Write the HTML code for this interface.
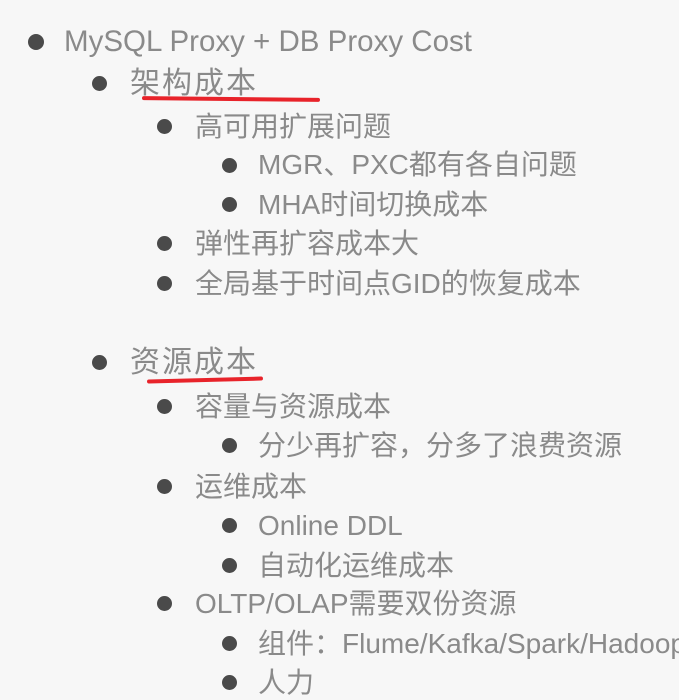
<!DOCTYPE html>
<html><head><meta charset="utf-8"><style>
html,body{margin:0;padding:0}
body{width:679px;height:697px;background:#f7f7f7;position:relative;overflow:hidden;font-family:"Liberation Sans","Noto Sans CJK SC",sans-serif;color:#8a8a8a}
.l{position:absolute;height:34px;line-height:34px;font-size:28px;white-space:nowrap}
.b{position:absolute;width:15px;height:15px;border-radius:50%;background:#4a4a4a}
.r{position:absolute;background:#e8232a;border-radius:3px;height:4px}
</style></head><body>
<div class="b" style="left:28px;top:34px;width:16px;height:16px"></div><div class="l" style="left:64px;top:25px;font-size:29.5px">MySQL Proxy + DB Proxy Cost</div>
<div class="b" style="left:92px;top:76px"></div><div class="l" style="left:130px;top:67px;font-size:30px;letter-spacing:2px">架构成本</div>
<div class="r" style="left:142px;top:97px;width:178px;transform:rotate(0.6deg)"></div>
<div class="b" style="left:157px;top:119px"></div><div class="l" style="left:195px;top:110px">高可用扩展问题</div>
<div class="b" style="left:222px;top:158px"></div><div class="l" style="left:258px;top:148px">MGR、PXC都有各自问题</div>
<div class="b" style="left:222px;top:197px"></div><div class="l" style="left:258px;top:188px">MHA时间切换成本</div>
<div class="b" style="left:157px;top:236px"></div><div class="l" style="left:195px;top:227px">弹性再扩容成本大</div>
<div class="b" style="left:157px;top:276px"></div><div class="l" style="left:195px;top:267px">全局基于时间点GID的恢复成本</div>
<div class="b" style="left:92px;top:355px"></div><div class="l" style="left:130px;top:346px;font-size:30px;letter-spacing:2px">资源成本</div>
<div class="r" style="left:147px;top:378px;width:116px;transform:rotate(-1.5deg)"></div>
<div class="b" style="left:157px;top:399px"></div><div class="l" style="left:195px;top:390px">容量与资源成本</div>
<div class="b" style="left:222px;top:438px"></div><div class="l" style="left:258px;top:429px">分少再扩容，分多了浪费资源</div>
<div class="b" style="left:157px;top:479px"></div><div class="l" style="left:195px;top:470px">运维成本</div>
<div class="b" style="left:222px;top:518px"></div><div class="l" style="left:258px;top:509px">Online DDL</div>
<div class="b" style="left:222px;top:558px"></div><div class="l" style="left:258px;top:549px">自动化运维成本</div>
<div class="b" style="left:157px;top:596px"></div><div class="l" style="left:195px;top:587px">OLTP/OLAP需要双份资源</div>
<div class="b" style="left:222px;top:636px"></div><div class="l" style="left:258px;top:627px">组件：Flume/Kafka/Spark/Hadoop</div>
<div class="b" style="left:222px;top:675px"></div><div class="l" style="left:258px;top:666px">人力</div>
</body></html>
